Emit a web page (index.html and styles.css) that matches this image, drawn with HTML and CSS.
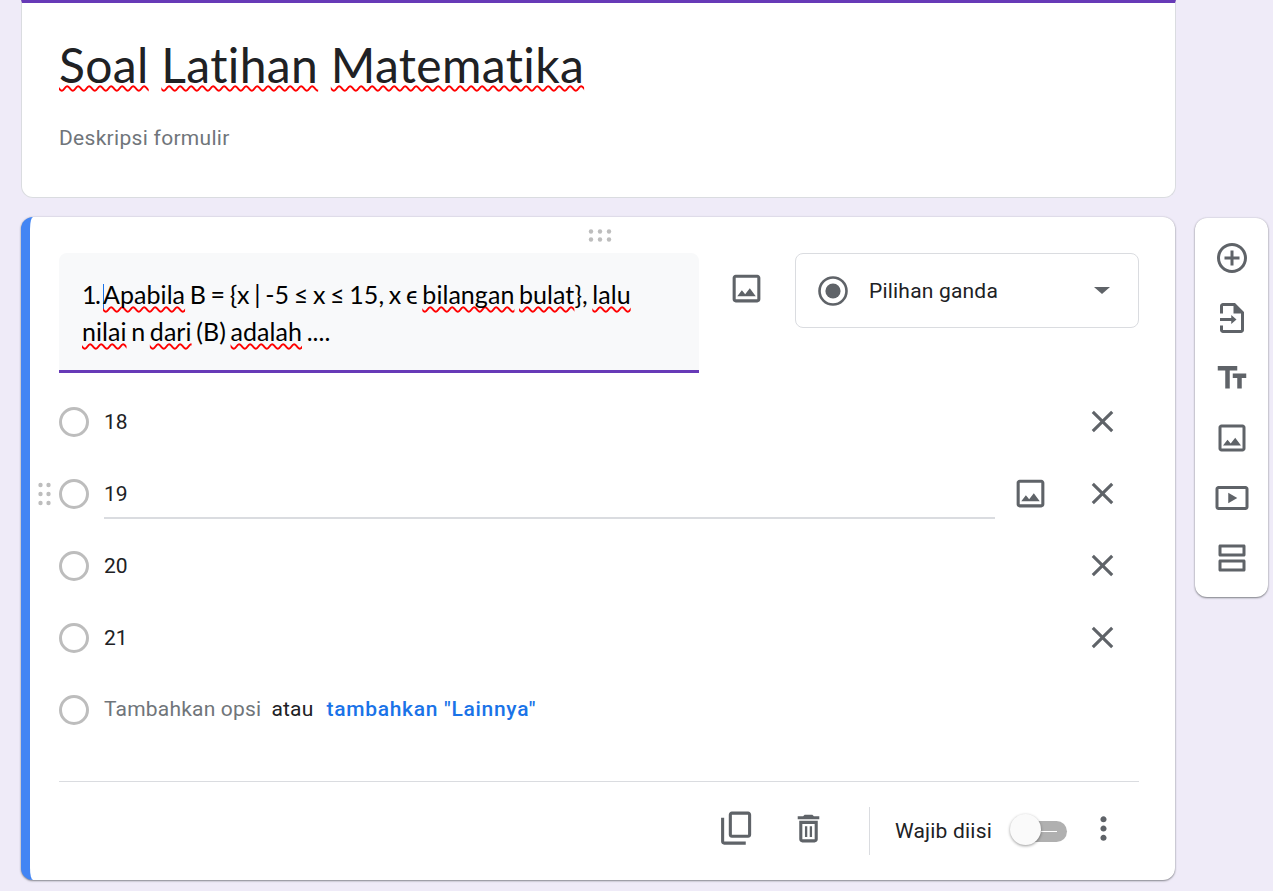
FILE: index.html
```html
<!DOCTYPE html>
<html lang="id">
<head>
<meta charset="utf-8">
<title>Soal Latihan Matematika</title>
<link rel="stylesheet" href="styles.css">
</head>
<body>
<div class="page">
  <main class="main">
    <section class="card head-card">
      <h1 class="title"><span class="sp">Soal</span> <span class="sp">Latihan</span> <span class="sp">Matematika</span></h1>
      <p class="desc">Deskripsi formulir</p>
    </section>
    <section class="card q-card">
      <div class="drag-top">
        <svg width="24" height="13" viewBox="0 0 24 13"><g fill="#bdbdbd"><circle cx="3" cy="2.5" r="2.2"/><circle cx="12" cy="2.5" r="2.2"/><circle cx="21" cy="2.5" r="2.2"/><circle cx="3" cy="10.5" r="2.2"/><circle cx="12" cy="10.5" r="2.2"/><circle cx="21" cy="10.5" r="2.2"/></g></svg>
      </div>
      <div class="q-top">
        <div class="q-box"><span class="q-num">1.</span> <span class="caret"></span><span class="sp">Apabila</span> B = {x | -5 ≤ x ≤ 15, x ϵ <span class="sp">bilangan</span> <span class="sp">bulat</span>}, <span class="sp">lalu</span><br><span class="sp">nilai</span> n <span class="sp">dari</span> (B) <span class="sp">adalah</span> ....</div>
        <div class="q-img">
          <svg class="ic" viewBox="0 0 24 24"><path d="M19 5v14H5V5h14m0-2H5c-1.1 0-2 .9-2 2v14c0 1.1.9 2 2 2h14c1.1 0 2-.9 2-2V5c0-1.1-.9-2-2-2zm-4.86 8.86l-3 3.87L9 13.14 6 17h12l-3.86-5.14z"/></svg>
        </div>
        <div class="type-select">
          <svg class="type-radio" width="30" height="30" viewBox="0 0 30 30"><circle cx="15" cy="15" r="13.5" fill="none" stroke="#5f6368" stroke-width="2.6"/><circle cx="15" cy="15" r="7.6" fill="#5f6368"/></svg>
          <span class="type-label">Pilihan ganda</span>
          <span class="type-arrow"></span>
        </div>
      </div>
      <div class="options">
        <div class="opt"><span class="radio"></span><div class="opt-field">18</div><span class="opt-gap"></span><svg class="ic x" viewBox="0 0 24 24"><path d="M19 6.41L17.59 5 12 10.59 6.41 5 5 6.41 10.59 12 5 17.59 6.41 19 12 13.41 17.59 19 19 17.59 13.41 12z"/></svg></div>
        <div class="opt">
          <svg class="drag-side" width="13" height="24" viewBox="0 0 13 24"><g fill="#bdbdbd"><circle cx="2.5" cy="3" r="2.2"/><circle cx="10.5" cy="3" r="2.2"/><circle cx="2.5" cy="12" r="2.2"/><circle cx="10.5" cy="12" r="2.2"/><circle cx="2.5" cy="21" r="2.2"/><circle cx="10.5" cy="21" r="2.2"/></g></svg>
          <span class="radio"></span><div class="opt-field active">19</div><span class="opt-gap"><svg class="ic" viewBox="0 0 24 24"><path d="M19 5v14H5V5h14m0-2H5c-1.1 0-2 .9-2 2v14c0 1.1.9 2 2 2h14c1.1 0 2-.9 2-2V5c0-1.1-.9-2-2-2zm-4.86 8.86l-3 3.87L9 13.14 6 17h12l-3.86-5.14z"/></svg></span><svg class="ic x" viewBox="0 0 24 24"><path d="M19 6.41L17.59 5 12 10.59 6.41 5 5 6.41 10.59 12 5 17.59 6.41 19 12 13.41 17.59 19 19 17.59 13.41 12z"/></svg></div>
        <div class="opt"><span class="radio"></span><div class="opt-field">20</div><span class="opt-gap"></span><svg class="ic x" viewBox="0 0 24 24"><path d="M19 6.41L17.59 5 12 10.59 6.41 5 5 6.41 10.59 12 5 17.59 6.41 19 12 13.41 17.59 19 19 17.59 13.41 12z"/></svg></div>
        <div class="opt"><span class="radio"></span><div class="opt-field">21</div><span class="opt-gap"></span><svg class="ic x" viewBox="0 0 24 24"><path d="M19 6.41L17.59 5 12 10.59 6.41 5 5 6.41 10.59 12 5 17.59 6.41 19 12 13.41 17.59 19 19 17.59 13.41 12z"/></svg></div>
        <div class="opt add"><span class="radio"></span><div class="add-text"><span class="muted">Tambahkan opsi</span><span class="atau">atau</span><span class="link">tambahkan "Lainnya"</span></div></div>
      </div>
      <div class="footer">
        <svg class="ic" viewBox="0 0 24 24"><path d="M19.5 1H9c-1.1 0-2 .9-2 2v13c0 1.1.9 2 2 2h10.5c1.1 0 2-.9 2-2V3c0-1.1-.9-2-2-2zm0 15H9V3h10.5v13z"/><path d="M2 5h2v15.5h14v2H4c-1.1 0-2-.9-2-2z"/></svg>
        <svg class="ic trash" viewBox="0 0 24 24"><path d="M16 9v10H8V9h8m-1.5-6h-5l-1 1H5v2h14V4h-3.5l-1-1zM18 7H6v12c0 1.1.9 2 2 2h8c1.1 0 2-.9 2-2V7z"/><path d="M9.7 10.5h1.5v7H9.7zM12.8 10.5h1.5v7h-1.5z"/></svg>
        <span class="vline"></span>
        <span class="req">Wajib diisi</span>
        <span class="toggle"><span class="knob"></span></span>
        <svg class="ic more" viewBox="0 0 24 24"><path d="M12 8c1.1 0 2-.9 2-2s-.9-2-2-2-2 .9-2 2 .9 2 2 2zm0 2c-1.1 0-2 .9-2 2s.9 2 2 2 2-.9 2-2-.9-2-2-2zm0 6c-1.1 0-2 .9-2 2s.9 2 2 2 2-.9 2-2-.9-2-2-2z"/></svg>
      </div>
    </section>
  </main>
  <aside class="sidebar">
    <svg class="ic" viewBox="0 0 24 24"><path d="M13 7h-2v4H7v2h4v4h2v-4h4v-2h-4V7zm-1-5C6.48 2 2 6.48 2 12s4.48 10 10 10 10-4.48 10-10S17.52 2 12 2zm0 18c-4.41 0-8-3.59-8-8s3.59-8 8-8 8 3.59 8 8-3.59 8-8 8z"/></svg>
    <svg class="ic" viewBox="0 0 24 24"><path d="M14 2H6c-1.1 0-2 .9-2 2v5h2V4h7v5h5v11H6v-3H4v3c0 1.1.9 2 2 2h12c1.1 0 2-.9 2-2V8l-6-6z"/><path d="M4 12h7.5v-2l3.5 3-3.5 3v-2H4z"/></svg>
    <svg class="ic" viewBox="0 0 24 24"><path d="M2.5 4v3h5v12h3V7h5V4h-13zm19 5h-9v3h3v7h3v-7h3V9z"/></svg>
    <svg class="ic" viewBox="0 0 24 24"><path d="M19 5v14H5V5h14m0-2H5c-1.1 0-2 .9-2 2v14c0 1.1.9 2 2 2h14c1.1 0 2-.9 2-2V5c0-1.1-.9-2-2-2zm-4.86 8.86l-3 3.87L9 13.14 6 17h12l-3.86-5.14z"/></svg>
    <svg class="ic" viewBox="0 0 24 24"><path d="M21 4H3c-1.1 0-2 .9-2 2v12c0 1.1.9 2 2 2h18c1.1 0 2-.9 2-2V6c0-1.1-.9-2-2-2zm0 14H3V6h18v12z"/><path d="M9.5 8.5v7l6-3.5z"/></svg>
    <svg class="ic" viewBox="0 0 24 24"><path d="M20 13H4c-.55 0-1 .45-1 1v6c0 .55.45 1 1 1h16c.55 0 1-.45 1-1v-6c0-.55-.45-1-1-1zm-1 6H5v-4h14v4zM20 3H4c-.55 0-1 .45-1 1v6c0 .55.45 1 1 1h16c.55 0 1-.45 1-1V4c0-.55-.45-1-1-1zm-1 6H5V5h14v4z"/></svg>
  </aside>
</div>
</body>
</html>
```

FILE: styles.css
```css
* { box-sizing: border-box; }
html, body { margin: 0; height: 100%; }
body {
  background: #efebf8;
  font-family: Roboto, "Liberation Sans", sans-serif;
  color: #202124;
  overflow: hidden;
}
.page {
  display: flex;
  align-items: flex-start;
  gap: 20px;
  padding-left: 21px;
  height: 891px;
}
.main {
  width: 1154px;
  display: flex;
  flex-direction: column;
  gap: 19px;
}
.card {
  background: #fff;
  border-radius: 0 0 12px 12px;
}
.head-card {
  height: 198px;
  margin-right: -1px;
  border: 1px solid #dadce0;
  border-top: 3px solid #673ab7;
  border-radius: 0 0 12px 12px;
  padding: 32px 37px 0;
}
.title {
  margin: 0;
  font-family: Lato, Inter, sans-serif;
  font-variant-ligatures: none;
  font-weight: 400;
  font-size: 48px;
  letter-spacing: .35px;
  line-height: 60px;
  color: #202124;
}
.sp {
  text-decoration: underline wavy #f00 1.5px;
  text-underline-offset: 2px;
  text-decoration-skip-ink: none;
}
.desc {
  margin: 29px 0 0;
  font-size: 21px;
  letter-spacing: .3px;
  line-height: 28px;
  color: #70757a;
}
.q-card {
  position: relative;
  height: 663px;
  border-radius: 12px;
  border-left: 9px solid #4285f4;
  padding: 36px 36px 0 29px;
  box-shadow: 0 1px 2px rgba(60,64,67,.55), 0 0 2px rgba(60,64,67,.2);
}
.drag-top {
  position: absolute;
  left: 558px;
  top: 12px;
  line-height: 0;
}
.q-top {
  display: flex;
  align-items: flex-start;
  height: 133px;
}
.q-box {
  width: 640px;
  height: 120px;
  background: #f8f9fa;
  border-bottom: 3px solid #673ab7;
  border-radius: 8px 8px 0 0;
  padding: 23px 20px 0 23px;
  font-family: Lato, Inter, sans-serif;
  font-variant-ligatures: none;
  font-size: 25px;
  word-spacing: -1.8px;
  letter-spacing: .05px;
  line-height: 37px;
  color: #000;
}
.q-num { letter-spacing: -1.5px; margin-right: -1px; }
.caret {
  display: inline-block;
  width: 1px;
  height: 25px;
  margin-right: -1px;
  background: #1a73e8;
  vertical-align: -5px;
}
.q-img {
  width: 95px;
  height: 70px;
  margin-right: 1px;
  display: flex;
  align-items: center;
  justify-content: center;
}
.ic {
  width: 37px;
  height: 37px;
  fill: #5f6368;
  flex: none;
  display: block;
}
.type-select {
  width: 344px;
  height: 75px;
  border: 1px solid #dadce0;
  border-radius: 8px;
  display: flex;
  align-items: center;
  padding: 0 28px 0 22px;
}
.type-label {
  margin-left: 21px;
  font-size: 21px;
  letter-spacing: .2px;
  flex: 1;
}
.type-arrow {
  width: 0;
  height: 0;
  border-left: 8px solid transparent;
  border-right: 8px solid transparent;
  border-top: 7px solid #5f6368;
}
.opt {
  position: relative;
  display: flex;
  align-items: center;
  height: 72px;
}
.radio {
  width: 30px;
  height: 30px;
  border: 3px solid #bdbdbd;
  border-radius: 50%;
  flex: none;
}
.opt-field {
  width: 891px;
  margin-left: 15px;
  height: 48px;
  line-height: 48px;
  font-size: 21px;
  border-bottom: 2px solid transparent;
}
.opt-field.active { border-bottom-color: #dadce0; height: 49px; margin-top: 1px; }
.opt-gap {
  width: 71px;
  margin-bottom: 2px;
  display: flex;
  justify-content: center;
}
.x { margin-left: 18px; margin-bottom: 2px; }
.drag-side {
  position: absolute;
  left: -21px;
  top: 24px;
}
.add-text {
  margin-left: 15px;
  font-size: 21px;
  display: flex;
  align-items: center;
  margin-bottom: 3px;
}
.muted { color: #70757a; letter-spacing: .2px; }
.atau { margin-left: 10px; letter-spacing: .2px; }
.link { margin-left: 13px; color: #1a73e8; font-weight: 500; letter-spacing: .7px; }
.footer {
  margin-top: 35px;
  border-top: 1px solid #dadce0;
  display: flex;
  align-items: center;
  justify-content: flex-end;
  height: 99px;
  padding: 0 17px 6px 0;
}
.trash { margin-left: 35px; }
.vline {
  width: 1px;
  height: 48px;
  background: #dadce0;
  margin-left: 42px;
  margin-top: 6px;
}
.req {
  margin-left: 25px;
  font-size: 21px;
  letter-spacing: .2px;
  margin-top: 6px;
}
.toggle {
  position: relative;
  width: 42px;
  height: 21px;
  background: #b0b0b0;
  border-radius: 11px;
  margin-left: 33px;
  margin-top: 6px;
  flex: none;
}
.toggle::after {
  content: "";
  position: absolute;
  left: 16px;
  top: 10px;
  width: 16px;
  height: 1px;
  background: #fff;
}
.knob {
  position: absolute;
  left: -15px;
  top: -7px;
  width: 31px;
  height: 31px;
  border-radius: 50%;
  background: #fafafa;
  box-shadow: 0 1px 3px rgba(0,0,0,.4);
  z-index: 1;
}
.more { margin-left: 18px; }
.sidebar {
  margin-top: 218px;
  width: 73px;
  height: 379px;
  background: #fff;
  border-radius: 12px;
  box-shadow: 0 1px 2px rgba(60,64,67,.6), 0 0 2px rgba(60,64,67,.2);
  padding: 10px 0;
  display: grid;
  grid-auto-rows: 60px;
  justify-items: center;
  align-items: center;
}
.sidebar .ic { width: 36px; height: 36px; }
```
